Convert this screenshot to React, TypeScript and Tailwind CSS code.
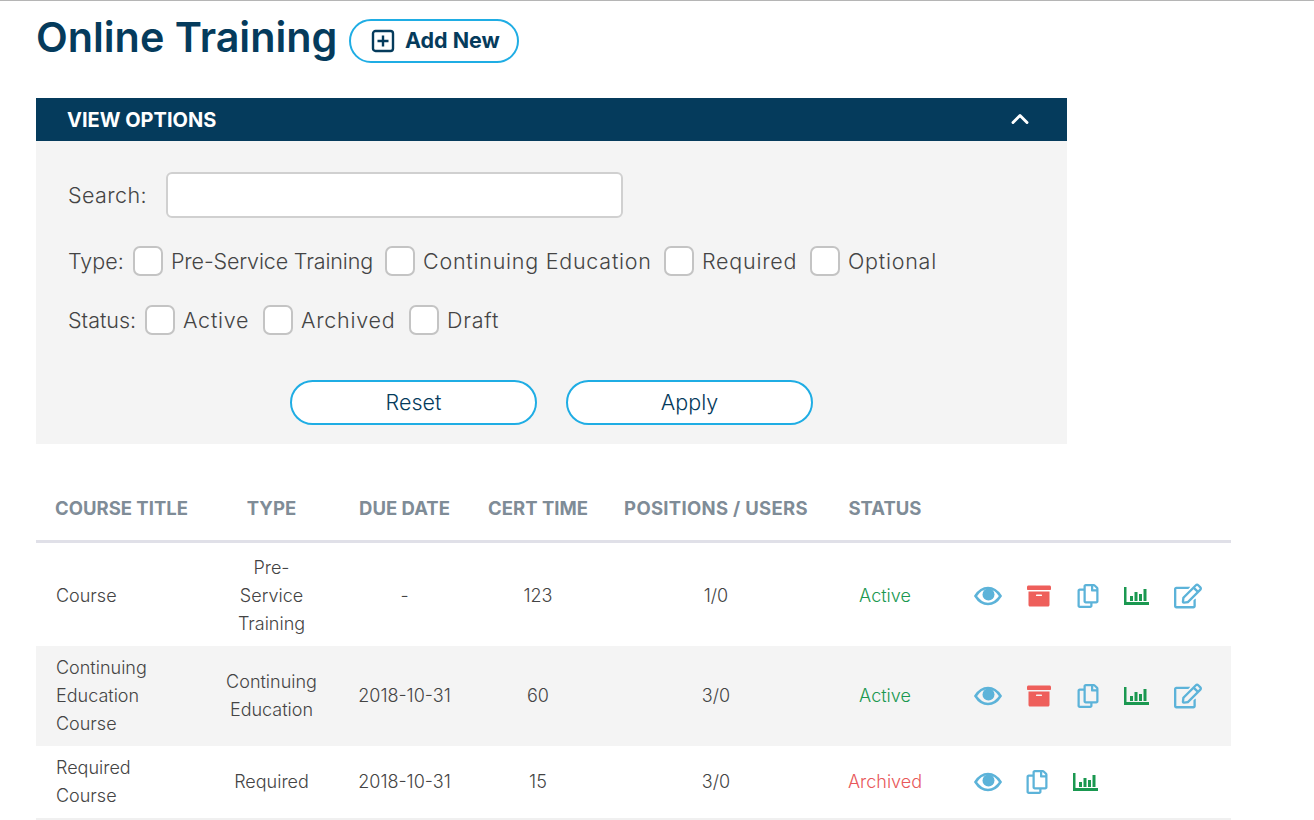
import { ChevronUp } from "lucide-react";
import { FaArchive, FaRegCopy, FaRegEdit } from "react-icons/fa";

const font = "font-['Inter','Liberation_Sans',sans-serif]";

function Eye() {
  return (
    <svg width="28" height="20" viewBox="0 0 28 20" fill="none">
      <path d="M1.500 10C5 4.500 9 2 14 2s9 2.500 12.500 8C23 15.500 19 18 14 18S5 15.500 1.500 10Z" stroke="#5cb3d9" strokeWidth="2.600" />
      <circle cx="14.500" cy="8.500" r="6" fill="#5cb3d9" />
    </svg>
  );
}

function Bars() {
  return (
    <svg width="25" height="20" viewBox="0 0 25 20" fill="#1a9850">
      <path d="M0 1h2.500v15H25v3H0z" />
      <rect x="6" y="10" width="3" height="5" />
      <rect x="10.500" y="6" width="3" height="9" />
      <rect x="15" y="8" width="3" height="7" />
      <rect x="19.500" y="3" width="3" height="12" />
    </svg>
  );
}

function Check({ label, width, tight }: { label: string; width: string; tight?: boolean }) {
  return (
    <label className={`flex items-center gap-[8px] whitespace-nowrap ${width}`}>
      <span className="w-[30px] h-[30px] shrink-0 rounded-[7px] border-2 border-[#c4c4c4] bg-white" />
      <span className={tight ? "tracking-[-0.15px]" : "tracking-[0.75px]"}>{label}</span>
    </label>
  );
}

function Actions({ archived }: { archived?: boolean }) {
  return (
    <div className="flex items-center pl-[32px]">
      <div className={archived ? "w-[51px]" : "w-[53px]"}><Eye /></div>
      {!archived && <div className="w-[49px]"><FaArchive size={24} color="#ee5f5b" /></div>}
      <div className="w-[48px]"><FaRegCopy size={24} color="#5cb3d9" /></div>
      <div className="w-[50px]"><Bars /></div>
      {!archived && <FaRegEdit size={28} color="#5cb3d9" />}
    </div>
  );
}

const rows = [
  { title: "Course", type: "Pre-Service Training", due: "-", cert: "123", pos: "1/0", status: "Active", h: "h-[105px] [&>td]:pt-[4px]" },
  { title: "Continuing Education Course", type: "Continuing Education", due: "2018-10-31", cert: "60", pos: "3/0", status: "Active", h: "h-[100px]", bg: "bg-[#f4f4f4]" },
  { title: "Required Course", type: "Required", due: "2018-10-31", cert: "15", pos: "3/0", status: "Archived", h: "h-[73px]" },
];

export default function App() {
  return (
    <div className={`min-h-screen bg-white border-t border-[#b5b5b5] pl-[36px] overflow-hidden text-[#444444] ${font}`}>
      <div className="flex items-center h-[80px] pb-[1px]">
        <h1 className="text-[41.300px] font-semibold text-[#053b5c] -mt-[6px]">Online Training</h1>
        <button className="ml-[12px] w-[170px] h-[44px] pl-[2px] rounded-full border-2 border-[#1fade4] flex items-center justify-center gap-[10px] text-[21.500px] font-bold text-[#053b5c]">
          <svg width="24" height="24" viewBox="0 0 24 24" fill="none" stroke="#053b5c" strokeWidth="2.400">
            <rect x="2" y="2" width="20" height="20" rx="2.500" />
            <path d="M12 6.500v11M6.500 12h11" />
          </svg>
          Add New
        </button>
      </div>

      <section className="w-[1031px] mt-[17px] bg-[#f4f4f4]">
        <div className="h-[43px] bg-[#053b5c] flex items-center justify-between pl-[31px] pr-[33px] text-white font-bold text-[20px]">
          VIEW OPTIONS
          <ChevronUp size={28} strokeWidth={2.500} className="-mt-[2px]" />
        </div>
        <div className="h-[303px] pl-[32px] pt-[31px] text-[21.500px] font-light">
          <div className="flex items-center h-[46px]">
            <span className="w-[98px] tracking-[0.4px]">Search:</span>
            <input className="w-[457px] h-[46px] bg-white border-2 border-[#d0d0d0] rounded-[6px]" />
          </div>
          <div className="flex items-center mt-[28px] h-[30px]">
            <span className="w-[65px]">Type:</span>
            <Check width="w-[252px]" label="Pre-Service Training" tight />
            <Check width="w-[279px]" label="Continuing Education" />
            <Check width="w-[146px]" label="Required" />
            <Check width="w-[146px]" label="Optional" />
          </div>
          <div className="flex items-center mt-[29px] h-[30px]">
            <span className="w-[77px]">Status:</span>
            <Check width="w-[118px]" label="Active" />
            <Check width="w-[146px]" label="Archived" />
            <Check width="w-[100px]" label="Draft" />
          </div>
          <div className="flex gap-[29px] ml-[222px] mt-[45px] text-[#053b5c]">
            <button className="w-[247px] h-[45px] rounded-full border-2 border-[#1fade4] bg-white">Reset</button>
            <button className="w-[247px] h-[45px] rounded-full border-2 border-[#1fade4] bg-white">Apply</button>
          </div>
        </div>
      </section>

      <table className="table-fixed w-[1195px] mt-[30px] text-[18px] font-light text-center border-collapse">
        <thead>
          <tr className="h-[67px] border-b-[3px] border-[#e0e0e8] text-[#7f8c97] text-[18.500px]">
            <th className="w-[170px] text-left pl-[19px] pt-[5px] font-bold">COURSE TITLE</th>
            <th className="w-[131px] pt-[5px] font-bold">TYPE</th>
            <th className="w-[135px] pt-[5px] font-bold">DUE DATE</th>
            <th className="w-[132px] pt-[5px] font-bold">CERT TIME</th>
            <th className="w-[224px] pt-[5px] font-bold whitespace-nowrap tracking-[0.3px]">POSITIONS / USERS</th>
            <th className="w-[114px] pt-[5px] font-bold">STATUS</th>
            <th></th>
          </tr>
        </thead>
        <tbody className="leading-[28px]">
          {rows.map((r) => (
            <tr key={r.title} className={`${r.h} ${r.bg ?? ""} ${r.status === "Archived" ? "border-b-2 border-[#f0f0f0]" : ""}`}>
              <td className="text-left pl-[20px] pr-[30px]">{r.title}</td>
              <td className="px-[20px]">{r.type}</td>
              <td>{r.due}</td>
              <td>{r.cert}</td>
              <td>{r.pos}</td>
              <td className={r.status === "Active" ? "text-[#1a9850]" : "text-[#e8585a]"}>{r.status}</td>
              <td><Actions archived={r.status === "Archived"} /></td>
            </tr>
          ))}
        </tbody>
      </table>
    </div>
  );
}
